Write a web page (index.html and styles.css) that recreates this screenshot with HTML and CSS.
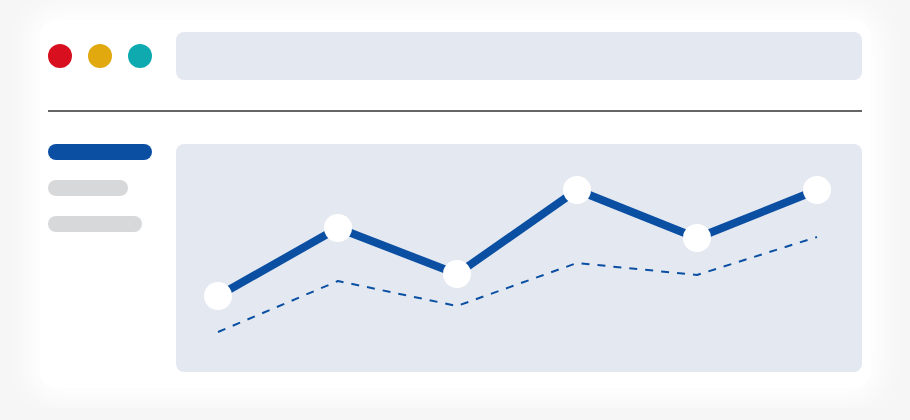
FILE: index.html
```html
<!DOCTYPE html>
<html lang="en">
<head>
    <meta charset="UTF-8">
    <meta name="viewport" content="width=device-width, initial-scale=1.0">
    <title>Dashboard Preview</title>
    <link rel="stylesheet" href="styles.css">
</head>
<body>
    <div class="window">
        <header class="window-bar">
            <div class="dots">
                <span class="dot red"></span>
                <span class="dot yellow"></span>
                <span class="dot teal"></span>
            </div>
            <div class="address"></div>
        </header>

        <hr class="divider">

        <main class="content">
            <nav class="sidebar">
                <span class="pill active"></span>
                <span class="pill short"></span>
                <span class="pill"></span>
            </nav>

            <section class="chart">
                <svg viewBox="0 0 686 228" width="686" height="228">
                    <!-- previous period -->
                    <polyline class="line-prev" points="42,188 162,137 281,162 401,119 521,131 641,93"/>
                    <!-- current period -->
                    <polyline class="line-main" points="42,152 162,84 281,130 401,46 521,94 641,46"/>
                    <g class="markers">
                        <circle cx="42" cy="152" r="14"/>
                        <circle cx="162" cy="84" r="14"/>
                        <circle cx="281" cy="130" r="14"/>
                        <circle cx="401" cy="46" r="14"/>
                        <circle cx="521" cy="94" r="14"/>
                        <circle cx="641" cy="46" r="14"/>
                    </g>
                </svg>
            </section>
        </main>
    </div>
</body>
</html>
```

FILE: styles.css
```css
/* Base styles */
* {
    margin: 0;
    padding: 0;
    box-sizing: border-box;
}

body {
    background: #f6f6f6;
    padding: 20px 40px;
    font-family: 'Liberation Sans', Arial, sans-serif;
}

/* Window card - soft white glow instead of a hard edge */
.window {
    width: 830px;
    background: #fff;
    padding: 12px 8px 16px;
    border-radius: 16px;
    box-shadow: 0 0 28px 12px #fff;
}

.window-bar {
    display: flex;
    align-items: center;
    gap: 24px;
    height: 48px;
}

.dots {
    display: flex;
    gap: 16px;
}

.dot {
    width: 24px;
    height: 24px;
    border-radius: 50%;
}

.red { background: #d80f1e; }
.yellow { background: #e1a90d; }
.teal { background: #0eaaaf; }

.address {
    flex: 1;
    height: 48px;
    background: #e4e9f1;
    border-radius: 8px;
}

.divider {
    border: none;
    height: 2px;
    background: #666;
    margin: 30px 0 32px;
}

/* Content area */
.content {
    display: flex;
    gap: 24px;
}

.sidebar {
    width: 104px;
    display: flex;
    flex-direction: column;
    gap: 20px;
}

.pill {
    display: block;
    height: 16px;
    width: 94px;
    background: #d7d8da;
    border-radius: 8px;
}

.pill.active {
    width: 104px;
    background: #0b4fa3;
}

.pill.short {
    width: 80px;
}

.chart {
    flex: 1;
    height: 228px;
    background: #e4e9f1;
    border-radius: 8px;
    overflow: hidden;
}

.chart svg {
    display: block;
}

.line-main {
    fill: none;
    stroke: #0b4fa3;
    stroke-width: 8;
    stroke-linejoin: round;
}

.line-prev {
    fill: none;
    stroke: #0b4fa3;
    stroke-width: 2;
    stroke-dasharray: 8 8;
    stroke-linejoin: round;
}

.markers circle {
    fill: #fff;
}
```
